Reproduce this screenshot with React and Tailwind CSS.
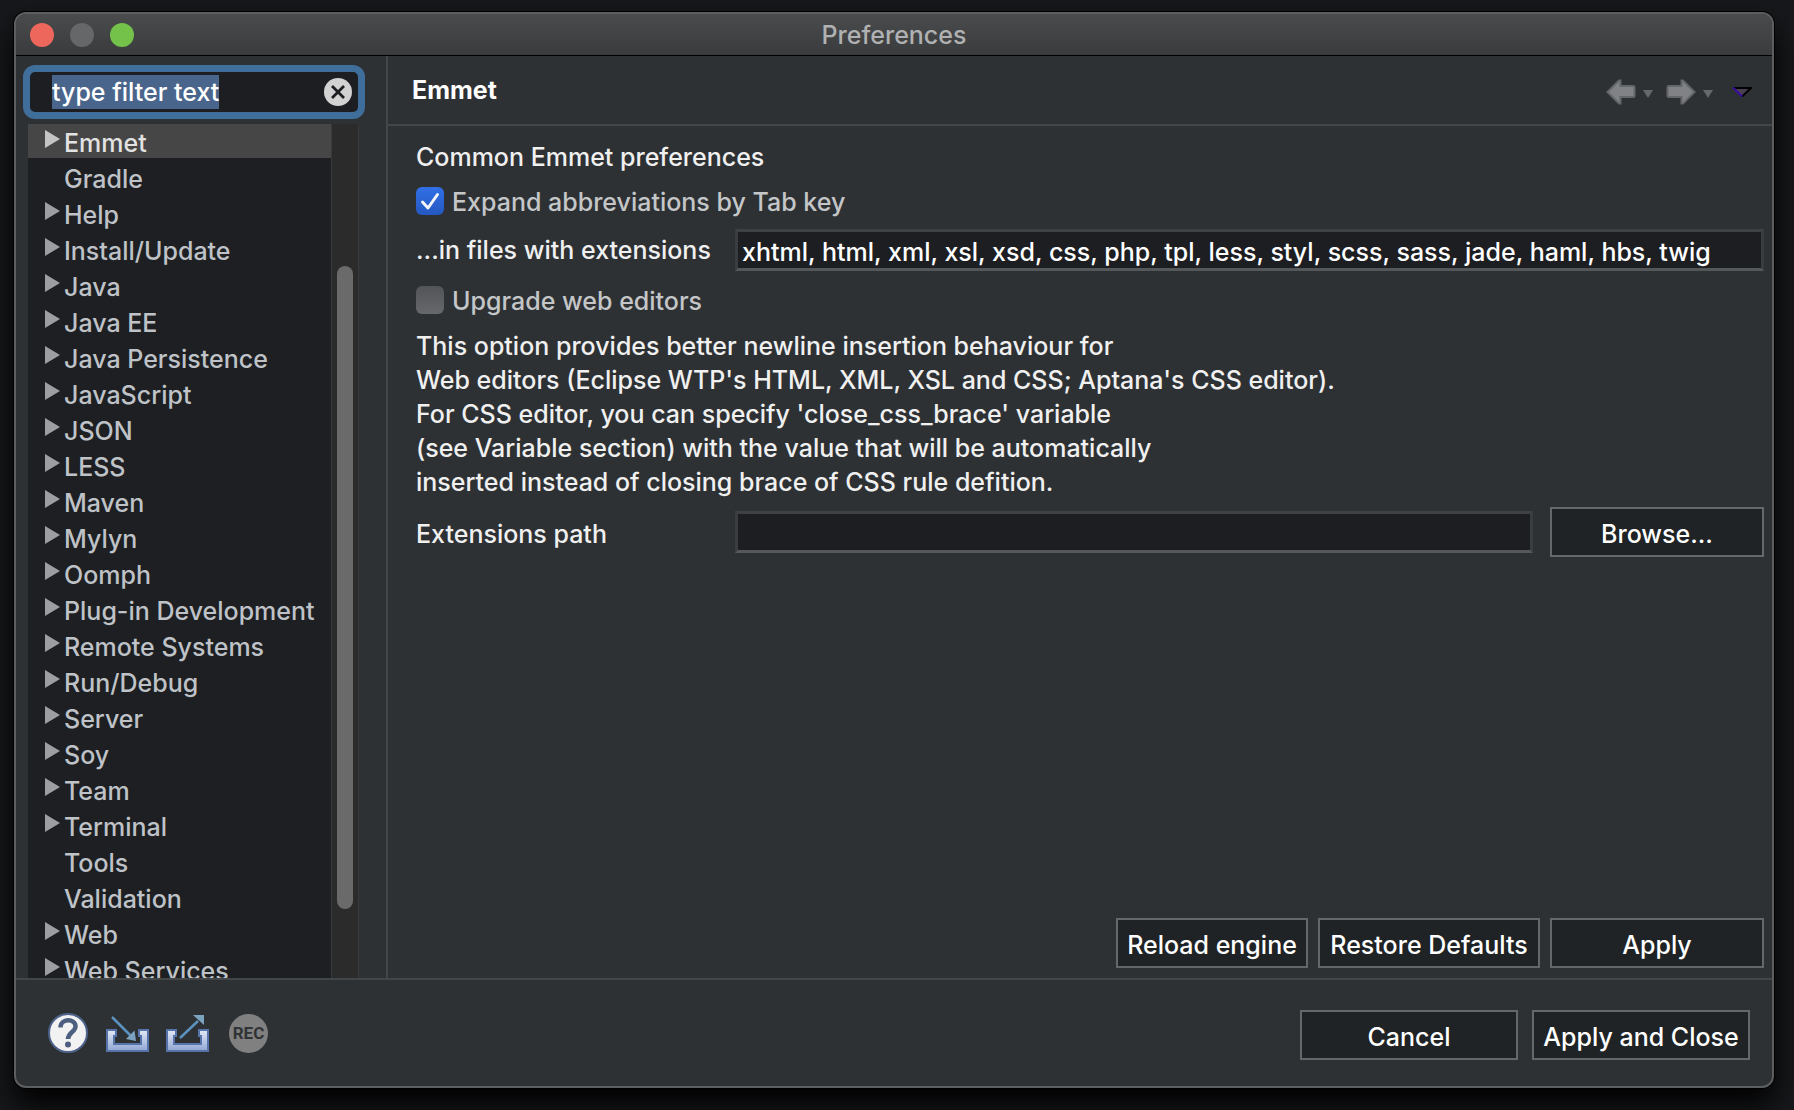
import { useEffect, useRef } from "react";

const tree = [
  ["Emmet", true], ["Gradle", false], ["Help", true], ["Install/Update", true], ["Java", true],
  ["Java EE", true], ["Java Persistence", true], ["JavaScript", true], ["JSON", true], ["LESS", true],
  ["Maven", true], ["Mylyn", true], ["Oomph", true], ["Plug-in Development", true],
  ["Remote Systems", true], ["Run/Debug", true], ["Server", true], ["Soy", true], ["Team", true],
  ["Terminal", true], ["Tools", false], ["Validation", false], ["Web", true], ["Web Services", true],
];

function PushButton({ className = "", children }) {
  return (
    <button type="button" className={`h-[50px] shrink-0 whitespace-nowrap border-2 border-[#656768] bg-[#1f2325] pt-1 text-white ${className}`}>
      {children}
    </button>
  );
}

function TreeItem({ label, expandable, selected }) {
  return (
    <li role="treeitem" aria-selected={selected} className={selected ? "mb-px flex h-[34px] shrink-0 items-center bg-[#464646] pl-[17px] text-[#e2e2e2]" : "flex h-9 shrink-0 items-center pl-[17px] text-[#bfc2c7]"}>
      <svg viewBox="0 0 15 18" className="mb-1 mr-1 h-[18px] w-[15px] shrink-0" aria-hidden="true">
        {expandable && <path d="M0 0 15 9 0 18Z" fill={selected ? "#c4c4c4" : "#9d9ea1"} />}
      </svg>
      <span className="whitespace-nowrap pt-1">{label}</span>
    </li>
  );
}

function NavArrow({ flip }) {
  return (
    <svg viewBox="0 0 30 26" className={flip ? "h-[26px] w-[30px] -scale-x-100" : "h-[26px] w-[30px]"} aria-hidden="true">
      <path d="M1.500 13 13 1.500H14.500V7H27Q28.500 7 28.500 8.500V16.500Q28.500 18 27 18H14.500V24.500H13Z" fill="#808285" stroke="#64676a" strokeWidth="2" />
    </svg>
  );
}

function SmallCaret() {
  return (
    <svg viewBox="0 0 10 8" className="mt-[3px] h-2 w-2.5" aria-hidden="true">
      <path d="M0 0H10L5 8Z" fill="#66696c" />
    </svg>
  );
}

function Tray({ out }) {
  const id = out ? "trayOut" : "trayIn";
  return (
    <svg viewBox="0 0 43 38" className="h-[38px] w-[43px]" aria-hidden="true">
      <defs>
        <linearGradient id={id} x1="0" y1="0" x2="0" y2="1">
          <stop offset="0" stopColor="#e3e8f5" />
          <stop offset="1" stopColor="#8fa6d3" />
        </linearGradient>
      </defs>
      <path d="M1 16H10V22H8V30H35V22H33V16H42V37H1Z" fill={`url(#${id})`} stroke="#5673aa" strokeWidth="2" />
      {out ? (
        <g>
          <path d="M14 24 32 7" stroke="#5b93c0" strokeWidth="2.500" />
          <path d="M27 1H38V11Z" fill="#7ba3bf" />
        </g>
      ) : (
        <g>
          <path d="M6 3 25 22" stroke="#5b93c0" strokeWidth="2.500" />
          <path d="M20 25 28.500 16.500 30 27Z" fill="#7ba3bf" />
        </g>
      )}
    </svg>
  );
}

const field = "h-[42px] min-w-0 border-[3px] border-t-[#3f4245] border-x-[#3a3d40] border-b-[#55585b] bg-[#1d1e22] px-1 pt-1 text-white outline-none";

export default function App() {
  const filter = useRef(null);
  useEffect(() => {
    filter.current.focus();
    filter.current.select();
  }, []);

  return (
    <div className="h-screen overflow-hidden bg-[#17181b] pb-[22px] pl-3.5 pr-5 pt-3 font-['Inter',sans-serif] text-[25px] font-medium leading-[34px]">
      <main className="flex h-full flex-col overflow-hidden rounded-xl border-2 border-[#5c5e60] bg-[#2e3134] shadow-[0_0_0_1px_#000,0_16px_30px_#000]">
        <header className="relative flex h-[42px] shrink-0 items-center justify-center border-b border-black bg-linear-to-b from-[#4a4b4c] to-[#3a3b3c]">
          <div className="absolute left-3.5 flex gap-4">
            <button type="button" aria-label="Close" className="size-6 rounded-full bg-[#ee675c]" />
            <button type="button" aria-label="Minimize" className="size-6 rounded-full bg-[#656768]" />
            <button type="button" aria-label="Zoom" className="size-6 rounded-full bg-[#74c24a]" />
          </div>
          <h1 className="text-[#b0b1b2]">Preferences</h1>
        </header>

        <div className="flex min-h-0 flex-1">
          <aside className="flex w-[372px] shrink-0 flex-col border-r-2 border-[#434649] pl-3 pr-[27px]">
            <div className="mt-[9px] flex h-[54px] w-[342px] shrink-0 -ml-[5px] items-center rounded-xl border-[7px] border-[#3f6e9a] bg-[#1d1e22] pl-[22px] pr-1.5">
              <input ref={filter} aria-label="Filter" defaultValue="type filter text" className="min-w-0 flex-1 bg-transparent text-white outline-none selection:bg-[#49658c] selection:text-white" />
              <button type="button" aria-label="Clear" className="size-7">
                <svg viewBox="0 0 28 28" className="size-7" aria-hidden="true">
                  <circle cx="14" cy="14" r="14" fill="#d2d2d2" />
                  <path d="M8 8 20 20M20 8 8 20" stroke="#1d1e22" strokeWidth="2.800" />
                </svg>
              </button>
            </div>
            <div className="mt-[5px] flex min-h-0 flex-1">
              <ul role="tree" className="flex min-w-0 flex-1 flex-col overflow-hidden bg-[#1d1f22]">
                {tree.map(([label, expandable], i) => (
                  <TreeItem key={label} label={label} expandable={expandable} selected={i === 0} />
                ))}
              </ul>
              <div className="flex w-7 flex-col items-center border-x border-[#393a3b] bg-[#2b2b2b] pb-[69px] pt-[142px]">
                <div className="w-4 flex-1 rounded-full bg-[#6a6a6a]" />
              </div>
            </div>
          </aside>

          <section className="flex min-w-0 flex-1 flex-col">
            <div className="flex h-[70px] shrink-0 items-center border-b-2 border-[#434649] pl-6 pr-5">
              <h2 className="flex-1 font-bold text-white">Emmet</h2>
              <div className="flex items-center pt-1">
                <button type="button" aria-label="Back"><NavArrow /></button>
                <button type="button" aria-label="Back history" className="ml-[7px]"><SmallCaret /></button>
                <button type="button" aria-label="Forward" className="ml-[13px]"><NavArrow flip /></button>
                <button type="button" aria-label="Forward history" className="ml-[7px]"><SmallCaret /></button>
                <button type="button" aria-label="Menu" className="ml-[19px]">
                  <svg viewBox="0 0 20 10" className="h-2.5 w-5" aria-hidden="true">
                    <path d="M2 1H18L10 9Z" fill="#4b3f52" />
                    <path d="M1 1H19L10 9.500" fill="none" stroke="#000" strokeWidth="2" />
                    <path d="M1 0.500 10 9.500" stroke="#3a0ca3" strokeWidth="2" />
                  </svg>
                </button>
              </div>
            </div>

            <div className="flex min-h-0 flex-1 flex-col pb-2.5 pl-7 pr-2 pt-3.5 text-[#f0f0f0]">
              <p>Common Emmet preferences</p>
              <label className="mt-2.5 flex h-[34px] items-center text-[#c4c6c8]">
                <span className="relative mr-2 size-7">
                  <input type="checkbox" defaultChecked className="block size-7 appearance-none rounded-md bg-linear-to-b from-[#3070e8] to-[#2558c0]" />
                  <svg viewBox="0 0 28 28" className="pointer-events-none absolute inset-0 size-7" aria-hidden="true">
                    <path d="M6.500 15 12 21 21.500 7.500" fill="none" stroke="#f2f5fb" strokeWidth="3" strokeLinecap="round" strokeLinejoin="round" />
                  </svg>
                </span>
                <span className="pt-0.5">Expand abbreviations by Tab key</span>
              </label>
              <div className="mt-[11px] flex items-center">
                <label htmlFor="extensions" className="w-[319px] shrink-0">...in files with extensions</label>
                <input id="extensions" defaultValue="xhtml, html, xml, xsl, xsd, css, php, tpl, less, styl, scss, sass, jade, haml, hbs, twig" className={`${field} flex-1`} />
              </div>
              <label className="mt-3 flex h-[34px] items-center text-[#c4c6c8]">
                <input type="checkbox" className="mr-2 block size-7 appearance-none rounded-md bg-linear-to-b from-[#525457] to-[#66686b]" />
                <span className="pt-0.5">Upgrade web editors</span>
              </label>
              <p className="mt-3">
                This option provides better newline insertion behaviour for<br />
                Web editors (Eclipse WTP's HTML, XML, XSL and CSS; Aptana's CSS editor).<br />
                For CSS editor, you can specify 'close_css_brace' variable<br />
                (see Variable section) with the value that will be automatically<br />
                inserted instead of closing brace of CSS rule defition.
              </p>
              <div className="mt-2 flex items-center">
                <label htmlFor="path" className="w-[319px] shrink-0 pt-1">Extensions path</label>
                <input id="path" className={`${field} mr-[17px] flex-1`} />
                <PushButton className="w-[214px]">Browse...</PushButton>
              </div>
              <div className="mt-auto flex justify-end gap-2.5">
                <PushButton className="w-[192px]">Reload engine</PushButton>
                <PushButton className="w-[222px]">Restore Defaults</PushButton>
                <PushButton className="w-[214px]">Apply</PushButton>
              </div>
            </div>
          </section>
        </div>

        <footer className="flex h-[108px] shrink-0 items-center border-t-2 border-[#434649] pl-8 pr-[22px]">
          <div className="flex flex-1 items-center">
            <button type="button" aria-label="Help">
              <svg viewBox="0 0 40 40" className="size-10" aria-hidden="true">
                <circle cx="20" cy="20" r="19" fill="#f2f2f2" stroke="#4d638c" strokeWidth="2" />
                <path d="M12.500 14.500C12.500 5 27.500 5 27.500 13.500C27.500 19 20 19 20 26" fill="none" stroke="#4d5f80" strokeWidth="4.500" />
                <circle cx="20" cy="31.500" r="3" fill="#4d5f80" />
              </svg>
            </button>
            <button type="button" aria-label="Import" className="ml-[18px]"><Tray /></button>
            <button type="button" aria-label="Export" className="ml-[17px]"><Tray out /></button>
            <button type="button" aria-label="Record" className="ml-5 flex size-[39px] items-center justify-center rounded-full bg-[#808080] font-['Roboto',sans-serif] text-[17px] font-bold text-[#303335]">REC</button>
          </div>
          <div className="flex gap-3.5 pt-1">
            <PushButton className="w-[218px]">Cancel</PushButton>
            <PushButton className="w-[218px]">Apply and Close</PushButton>
          </div>
        </footer>
      </main>
    </div>
  );
}
